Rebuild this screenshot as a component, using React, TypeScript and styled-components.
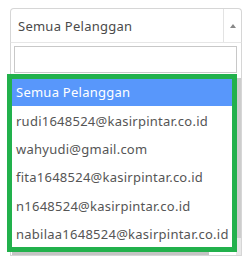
import React from "react";
import styled, { createGlobalStyle } from "styled-components";

const Global = createGlobalStyle`
  html, body { margin: 0; padding: 0; background: #fff; }
  body { font-family: "Noto Sans", "Open Sans", sans-serif; }
  * { box-sizing: border-box; }
`;

const Page = styled.div`
  width: 247px;
  height: 262px;
  padding: 8px 5px 0 10px;
  position: relative;
  overflow: hidden;
`;

const Select = styled.div`
  width: 232px;
  display: flex;
  flex-direction: column;
`;

const Header = styled.div`
  height: 35px;
  display: flex;
  border: 1px solid #d6d6d6;
  border-bottom: 1px solid #e6e6e6;
  border-radius: 4px 4px 0 0;
`;

const Label = styled.div`
  flex: 1;
  display: flex;
  align-items: center;
  padding-left: 7px;
  font-size: 13px;
  color: #4a4a4a;
  letter-spacing: 0.25px;
`;

const ArrowBox = styled.div`
  width: 18px;
  border-left: 1px solid #e3e3e3;
  display: flex;
  align-items: center;
  justify-content: center;
`;

const Arrow = styled.div`
  width: 0;
  height: 0;
  border-left: 3px solid transparent;
  border-right: 3px solid transparent;
  border-bottom: 4px solid #888;
`;

const Dropdown = styled.div`
  border: 1px solid #d6d6d6;
  border-top: none;
  height: 213px;
  display: flex;
  flex-direction: column;
  padding: 3px 3px 0 3px;
`;

const Search = styled.div`
  height: 27px;
  border: 1px solid #c8c8c8;
  margin-right: 1px;
`;

const ResultsWrap = styled.div`
  display: flex;
  margin: 5px -3px 0 -2px;
  flex: 1;
  min-height: 0;
`;

const ResultsCol = styled.div`
  flex: 1;
  display: flex;
  flex-direction: column;
  min-width: 0;
`;

const List = styled.div`
  flex: 1;
  overflow: hidden;
`;

const Item = styled.div<{ $active?: boolean }>`
  height: 28.4px;
  display: flex;
  align-items: center;
  padding-left: 4px;
  white-space: nowrap;
  font-size: 13px;
  letter-spacing: 0.25px;
  color: ${(p) => (p.$active ? "#fff" : "#555")};
  background: ${(p) => (p.$active ? "#5897fb" : "transparent")};
`;

const HScroll = styled.div`
  height: 6px;
  display: flex;
  align-items: stretch;
`;

const HThumb = styled.div`
  width: 197px;
  background: #c4c4c4;
`;

const VScroll = styled.div`
  width: 5px;
  background: #e8e8e8;
  display: flex;
  flex-direction: column;
`;

const VThumb = styled.div`
  height: 160px;
  background: #cdcdcd;
`;

const Highlight = styled.div`
  position: absolute;
  left: 7px;
  top: 74px;
  width: 230px;
  height: 178px;
  border: 5px solid #22b14c;
  pointer-events: none;
`;

const items = [
  "Semua Pelanggan",
  "rudi1648524@kasirpintar.co.id",
  "wahyudi@gmail.com",
  "fita1648524@kasirpintar.co.id",
  "n1648524@kasirpintar.co.id",
  "nabilaa1648524@kasirpintar.co.id",
];

export default function App() {
  return (
    <>
      <Global />
      <Page>
        <Select>
          <Header>
            <Label>Semua Pelanggan</Label>
            <ArrowBox>
              <Arrow />
            </ArrowBox>
          </Header>
          <Dropdown>
            <Search />
            <ResultsWrap>
              <ResultsCol>
                <List>
                  {items.map((t, i) => (
                    <Item key={t} $active={i === 0}>
                      {t}
                    </Item>
                  ))}
                </List>
                <HScroll>
                  <HThumb />
                </HScroll>
              </ResultsCol>
              <VScroll>
                <VThumb />
              </VScroll>
            </ResultsWrap>
          </Dropdown>
        </Select>
        <Highlight />
      </Page>
    </>
  );
}
